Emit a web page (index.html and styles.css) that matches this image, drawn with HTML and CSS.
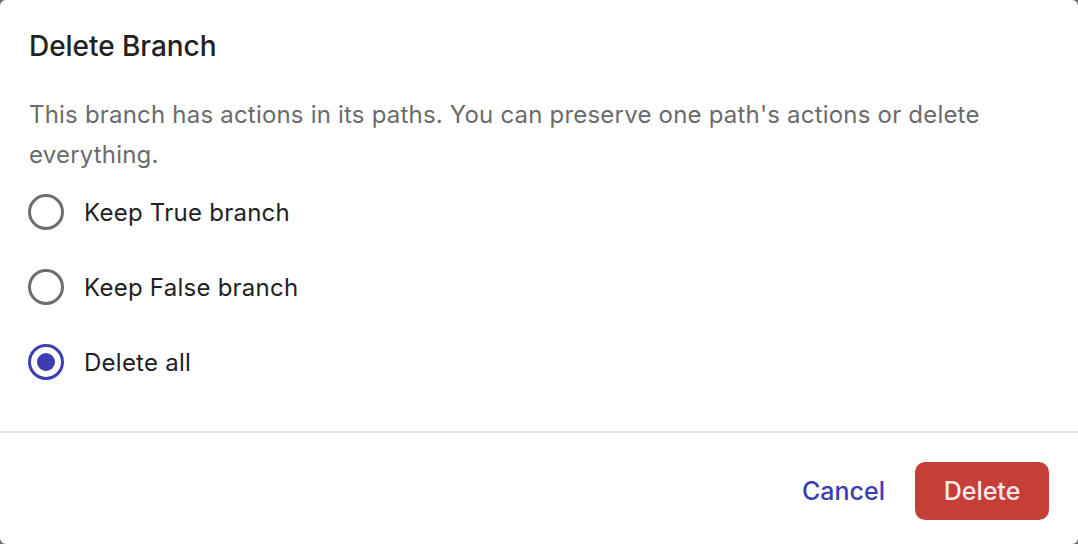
FILE: index.html
```html
<!DOCTYPE html>
<html>
<head>
<meta charset="utf-8">
<link rel="stylesheet" href="styles.css">
</head>
<body>
<div class="dialog">
  <div class="content">
    <h2 class="title">Delete Branch</h2>
    <p class="desc">This branch has actions in its paths. You can preserve one path's actions or delete everything.</p>
    <div class="options">
      <label class="option"><span class="radio"></span><span class="label">Keep True branch</span></label>
      <label class="option"><span class="radio"></span><span class="label">Keep False branch</span></label>
      <label class="option"><span class="radio checked"></span><span class="label">Delete all</span></label>
    </div>
  </div>
  <div class="footer">
    <button class="btn-cancel">Cancel</button>
    <button class="btn-delete">Delete</button>
  </div>
</div>
</body>
</html>
```

FILE: styles.css
```css
html, body {
  margin: 0;
  padding: 0;
  height: 100%;
  background: #6b6b6b;
}
body {
  font-family: Inter, "Noto Sans", sans-serif;
}
.dialog {
  width: 1078px;
  height: 544px;
  background: #fff;
  border-radius: 6px;
  box-sizing: border-box;
  display: flex;
  flex-direction: column;
}
.content {
  padding: 29px 29px 0 29px;
  flex: 1;
}
.title {
  margin: 0;
  font-size: 28px;
  font-weight: 450;
  letter-spacing: -0.05px;
  color: #222;
  line-height: 34px;
}
.desc {
  margin: 32px 0 0 0;
  font-size: 24px;
  letter-spacing: 0.2px;
  line-height: 40px;
  color: #6b6b6b;
}
.options {
  display: flex;
  flex-direction: column;
  gap: 39px;
  margin-top: 19px;
}
.option {
  display: flex;
  align-items: center;
  gap: 20px;
  height: 36px;
}
.radio {
  width: 30px;
  height: 30px;
  margin-left: -1px;
  border: 3px solid #6e6e6e;
  border-radius: 50%;
  display: flex;
  align-items: center;
  justify-content: center;
  box-sizing: content-box;
}
.radio.checked {
  border-color: #3c3db2;
}
.radio.checked::after {
  content: "";
  width: 18px;
  height: 18px;
  border-radius: 50%;
  background: #3c3db2;
}
.label {
  font-size: 24px;
  letter-spacing: 0.25px;
  color: #222;
}
.footer {
  border-top: 2px solid #e3e3e3;
  height: 113px;
  box-sizing: border-box;
  display: flex;
  justify-content: flex-end;
  align-items: center;
  gap: 30px;
  padding: 4px 29px 0 0;
}
.btn-cancel {
  background: none;
  border: none;
  font-family: inherit;
  font-size: 25px;
  font-weight: 500;
  color: #3c3db2;
  padding: 0;
}
.btn-delete {
  background: #c63e38;
  color: #fbeceb;
  border: none;
  border-radius: 10px;
  font-family: inherit;
  font-size: 25px;
  font-weight: 500;
  width: 134px;
  height: 58px;
}
```
